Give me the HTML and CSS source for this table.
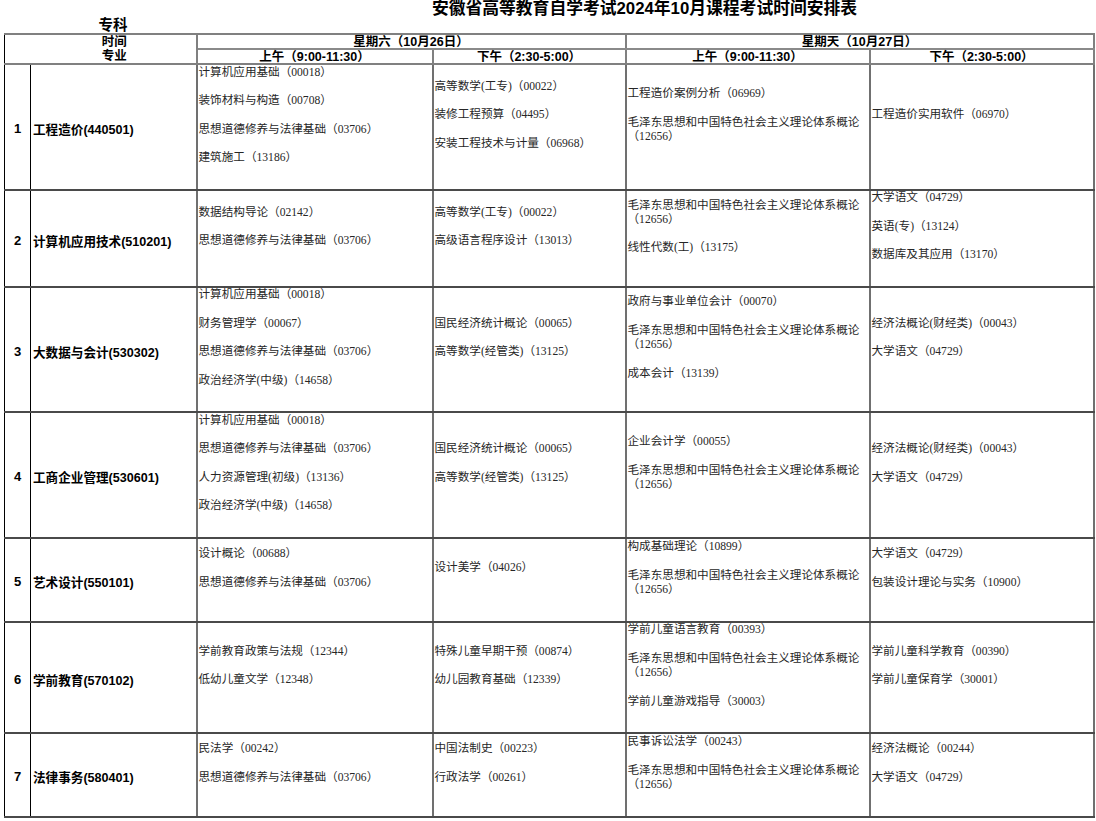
FILE: index.html
```html
<!DOCTYPE html>
<html lang="zh-CN">
<head>
<meta charset="utf-8">
<title>安徽省高等教育自学考试2024年10月课程考试时间安排表</title>
<link rel="stylesheet" href="styles.css">
</head>
<body>
<div class="page">
  <div class="top">
    <h1 class="title">安徽省高等教育自学考试2024年10月课程考试时间安排表</h1>
    <div class="level">专科</div>
  </div>
  <table class="schedule">
    <colgroup>
      <col class="c-num">
      <col class="c-major">
      <col class="c-sat-am">
      <col class="c-sat-pm">
      <col class="c-sun-am">
      <col class="c-sun-pm">
    </colgroup>
    <thead>
      <tr class="hrow">
        <th class="corner" colspan="2" rowspan="2"><div>时间</div><div>专业</div></th>
        <th class="day" colspan="2">星期六（10月26日）</th>
        <th class="day" colspan="2">星期天（10月27日）</th>
      </tr>
      <tr class="hrow">
        <th class="slot">上午（9:00-11:30）</th>
        <th class="slot">下午（2:30-5:00）</th>
        <th class="slot">上午（9:00-11:30）</th>
        <th class="slot">下午（2:30-5:00）</th>
      </tr>
    </thead>
    <tbody>
      <tr class="row-1">
        <td class="num">1</td>
        <td class="major">工程造价(440501)</td>
        <td class="courses"><div class="list"><p>计算机应用基础（00018）</p><p>装饰材料与构造（00708）</p><p>思想道德修养与法律基础（03706）</p><p>建筑施工（13186）</p></div></td>
        <td class="courses"><div class="list"><p>高等数学(工专)（00022）</p><p>装修工程预算（04495）</p><p>安装工程技术与计量（06968）</p></div></td>
        <td class="courses"><div class="list"><p>工程造价案例分析（06969）</p><p>毛泽东思想和中国特色社会主义理论体系概论（12656）</p></div></td>
        <td class="courses"><div class="list"><p>工程造价实用软件（06970）</p></div></td>
      </tr>
      <tr class="row-2">
        <td class="num">2</td>
        <td class="major">计算机应用技术(510201)</td>
        <td class="courses"><div class="list"><p>数据结构导论（02142）</p><p>思想道德修养与法律基础（03706）</p></div></td>
        <td class="courses"><div class="list"><p>高等数学(工专)（00022）</p><p>高级语言程序设计（13013）</p></div></td>
        <td class="courses"><div class="list"><p>毛泽东思想和中国特色社会主义理论体系概论（12656）</p><p>线性代数(工)（13175）</p></div></td>
        <td class="courses"><div class="list"><p>大学语文（04729）</p><p>英语(专)（13124）</p><p>数据库及其应用（13170）</p></div></td>
      </tr>
      <tr class="row-3">
        <td class="num">3</td>
        <td class="major">大数据与会计(530302)</td>
        <td class="courses"><div class="list"><p>计算机应用基础（00018）</p><p>财务管理学（00067）</p><p>思想道德修养与法律基础（03706）</p><p>政治经济学(中级)（14658）</p></div></td>
        <td class="courses"><div class="list"><p>国民经济统计概论（00065）</p><p>高等数学(经管类)（13125）</p></div></td>
        <td class="courses"><div class="list"><p>政府与事业单位会计（00070）</p><p>毛泽东思想和中国特色社会主义理论体系概论（12656）</p><p>成本会计（13139）</p></div></td>
        <td class="courses"><div class="list"><p>经济法概论(财经类)（00043）</p><p>大学语文（04729）</p></div></td>
      </tr>
      <tr class="row-4">
        <td class="num">4</td>
        <td class="major">工商企业管理(530601)</td>
        <td class="courses"><div class="list"><p>计算机应用基础（00018）</p><p>思想道德修养与法律基础（03706）</p><p>人力资源管理(初级)（13136）</p><p>政治经济学(中级)（14658）</p></div></td>
        <td class="courses"><div class="list"><p>国民经济统计概论（00065）</p><p>高等数学(经管类)（13125）</p></div></td>
        <td class="courses"><div class="list"><p>企业会计学（00055）</p><p>毛泽东思想和中国特色社会主义理论体系概论（12656）</p></div></td>
        <td class="courses"><div class="list"><p>经济法概论(财经类)（00043）</p><p>大学语文（04729）</p></div></td>
      </tr>
      <tr class="row-5">
        <td class="num">5</td>
        <td class="major">艺术设计(550101)</td>
        <td class="courses"><div class="list"><p>设计概论（00688）</p><p>思想道德修养与法律基础（03706）</p></div></td>
        <td class="courses"><div class="list"><p>设计美学（04026）</p></div></td>
        <td class="courses"><div class="list"><p>构成基础理论（10899）</p><p>毛泽东思想和中国特色社会主义理论体系概论（12656）</p></div></td>
        <td class="courses"><div class="list"><p>大学语文（04729）</p><p>包装设计理论与实务（10900）</p></div></td>
      </tr>
      <tr class="row-6">
        <td class="num">6</td>
        <td class="major">学前教育(570102)</td>
        <td class="courses"><div class="list"><p>学前教育政策与法规（12344）</p><p>低幼儿童文学（12348）</p></div></td>
        <td class="courses"><div class="list"><p>特殊儿童早期干预（00874）</p><p>幼儿园教育基础（12339）</p></div></td>
        <td class="courses"><div class="list"><p>学前儿童语言教育（00393）</p><p>毛泽东思想和中国特色社会主义理论体系概论（12656）</p><p>学前儿童游戏指导（30003）</p></div></td>
        <td class="courses"><div class="list"><p>学前儿童科学教育（00390）</p><p>学前儿童保育学（30001）</p></div></td>
      </tr>
      <tr class="row-7">
        <td class="num">7</td>
        <td class="major">法律事务(580401)</td>
        <td class="courses"><div class="list"><p>民法学（00242）</p><p>思想道德修养与法律基础（03706）</p></div></td>
        <td class="courses"><div class="list"><p>中国法制史（00223）</p><p>行政法学（00261）</p></div></td>
        <td class="courses"><div class="list"><p>民事诉讼法学（00243）</p><p>毛泽东思想和中国特色社会主义理论体系概论（12656）</p></div></td>
        <td class="courses"><div class="list"><p>经济法概论（00244）</p><p>大学语文（04729）</p></div></td>
      </tr>
    </tbody>
  </table>
</div>
</body>
</html>
```

FILE: styles.css
```css
* { box-sizing: border-box; }

html, body {
  margin: 0;
  padding: 0;
  background: #ffffff;
}

body {
  font-family: "Liberation Sans", "Noto Sans CJK SC", sans-serif;
  color: #000;
}

.page {
  padding-left: 4px;
  width: 1096px;
}

.top {
  display: grid;
  grid-template-columns: 26px 166px 897px;
  grid-template-rows: 17px 16px;
}

.title {
  grid-column: 3;
  grid-row: 1;
  margin: 0;
  font-size: 16.8px;
  line-height: 17px;
  font-weight: bold;
  text-align: center;
  white-space: nowrap;
}

.level {
  grid-column: 2;
  grid-row: 2;
  font-size: 14.5px;
  line-height: 16px;
  font-weight: bold;
  text-align: center;
}

.schedule {
  border-collapse: collapse;
  table-layout: fixed;
  width: 1089px;
  border-left: 1px solid #000;
  border-right: 2px solid #7a7a7a;
  border-top: 2px solid #808080;
  border-bottom: 2px solid #333;
}

.c-num { width: 26px; }
.c-major { width: 166px; }
.c-sat-am { width: 236px; }
.c-sat-pm { width: 193px; }
.c-sun-am { width: 244px; }
.c-sun-pm { width: 224px; }

th {
  font-weight: bold;
  font-size: 12.5px;
  line-height: 12px;
  padding: 0;
  text-align: center;
  vertical-align: middle;
  border: 2px solid #808080;
  white-space: nowrap;
}

.hrow { height: 15px; }

.corner {
  padding-left: 28px;
  border-left: 1px solid #000;
  font-size: 12.5px;
  line-height: 14px;
}

.day { border-bottom: 2px solid #8a8a8a; }

td {
  padding: 0;
  vertical-align: middle;
  border-top: 2px solid #4a4a4a;
  border-bottom: 2px solid #4a4a4a;
  border-left: 2px solid #707070;
  border-right: 2px solid #707070;
}

td.num {
  border-left: 1px solid #000;
  border-right: 1px solid #000;
  text-align: center;
  font-weight: bold;
  font-size: 13px;
  padding-top: 3px;
}

td.major {
  border-left: 1px solid #000;
  border-right: 1px solid #000;
  padding: 3px 2px 0 2px;
  font-weight: bold;
  font-size: 12.6px;
  white-space: nowrap;
}

td.courses {
  padding: 0 2px 23px 1px;
  font-family: "Liberation Serif", "Noto Sans CJK SC", serif;
  font-size: 11.6px;
  line-height: 14.2px;
  color: #262626;
}

.list {
  display: flex;
  flex-direction: column;
  gap: 14.3px;
}

.list p {
  margin: 0;
}

.row-1 { height: 126px; }
.row-2 { height: 97px; }
.row-3 { height: 125px; }
.row-4 { height: 126px; }
.row-5 { height: 84px; }
.row-6 { height: 111px; }
.row-7 { height: 84px; }
```
